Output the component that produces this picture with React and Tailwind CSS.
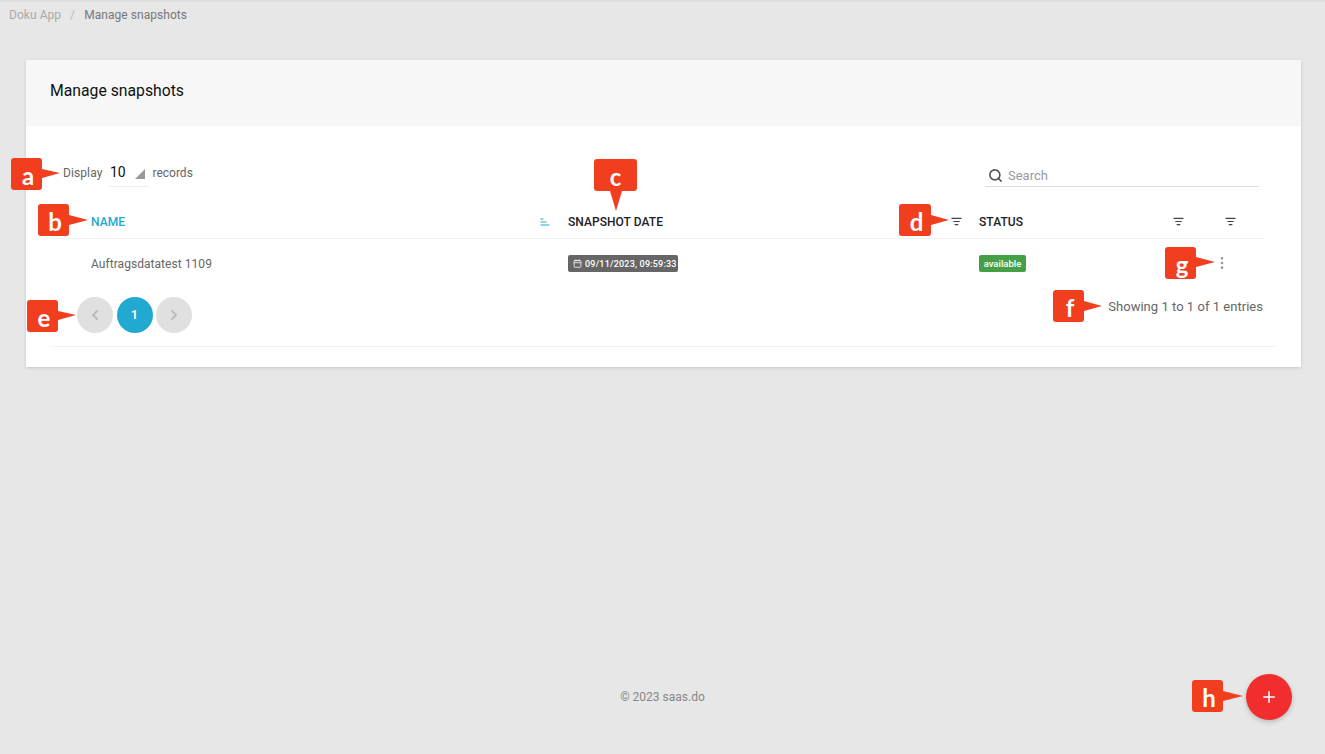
import React from "react";
import { Search, Calendar, ChevronLeft, ChevronRight, EllipsisVertical, Plus, ListFilter } from "lucide-react";

function FilterIcon() {
  return <ListFilter size={11} strokeWidth={2.6} className="text-[#444]" />;
}

function SortIcon() {
  return (
    <svg width="12" height="12" viewBox="0 0 12 12" fill="none" stroke="#22a9d1" strokeWidth="1.1">
      <path d="M1.5 3h3M1.5 6h6M1.5 9h9" />
    </svg>
  );
}

// annotation marker: box + pointer, laid over the page
function Callout({ letter, box, tip, base }) {
  return (
    <>
      <div className={`absolute flex items-center justify-center rounded-[3px] bg-[#f03e1f] pt-[3px] font-['Lato',sans-serif] text-[24px] leading-none font-bold text-white ${box}`}>
        {letter}
      </div>
      <svg className="pointer-events-none absolute top-0 left-0" width="1325" height="754">
        <polygon points={`${base} ${tip}`} fill="#f03e1f" />
      </svg>
    </>
  );
}

export default function App() {
  return (
    <div className="relative flex h-[754px] w-[1325px] flex-col overflow-hidden border-t-2 border-[#dedede] bg-[#e7e7e7] font-['Roboto',sans-serif]">
      <div className="flex h-[58px] shrink-0 items-start gap-[9px] pt-[6px] pl-[9px] text-xs leading-[15px] tracking-[0.05px]">
        <span className="text-[#aaa]">Doku App</span>
        <span className="text-[#bbb]">/</span>
        <span className="text-[#777]">Manage snapshots</span>
      </div>

      <div className="ml-[26px] h-[307px] w-[1275px] bg-white shadow-[0_1px_3px_rgba(0,0,0,0.15)]">
        <div className="flex h-[66px] items-center bg-[#f7f7f7] pb-[5px] pl-[24px] text-[15.75px] font-normal text-[#111]">
          Manage snapshots
        </div>

        <div className="flex h-[79px] items-start justify-between pt-[33px] pr-[42px] pl-[37px]">
          <div className="flex items-center text-xs text-[#666]">
            <span className="tracking-[0.1px]">Display</span>
            <div className="mr-[3px] ml-[7px] flex h-[28px] w-[40px] items-center justify-between border-b border-[#eee] pr-[3px] pb-[1px] text-sm text-[#111]">
              <span className="pl-[0.5px]">10</span>
              <svg width="12" height="12" viewBox="0 0 12 12" className="mt-[3px]">
                <polygon points="11,1 11,11 1,11" fill="#999" />
              </svg>
            </div>
            <span>records</span>
          </div>
          <div className="flex h-[28px] w-[274px] items-center gap-[5px] border-b border-[#ddd] pt-[6px] pl-[3px] text-[13px] text-[#999]">
            <Search size={15} strokeWidth={2.6} className="text-[#555]" />
            <span>Search</span>
          </div>
        </div>

        <div className="ml-[24px] w-[1214px]">
          <div className="grid h-[34px] grid-cols-[518px_411px_222px_63px] items-center border-b border-[#f0f0f0] text-xs font-medium tracking-[0.05px] text-[#222]">
            <div className="flex items-center justify-between pr-[17px] pl-[41px] text-[#22a9d1]">
              <span>NAME</span>
              <SortIcon />
            </div>
            <div className="flex items-center justify-between pr-[17px]">
              <span>SNAPSHOT DATE</span>
              <FilterIcon />
            </div>
            <div className="flex items-center justify-between pr-[17px]">
              <span>STATUS</span>
              <FilterIcon />
            </div>
            <div className="pl-[24px]">
              <FilterIcon />
            </div>
          </div>

          <div className="grid h-[45px] grid-cols-[518px_411px_222px_63px] items-center pt-[4px] text-xs tracking-[0.05px] text-[#666]">
            <div className="pl-[41px]">Auftragsdatatest 1109</div>
            <div>
              <span className="inline-flex h-[17px] w-[110px] items-center gap-[3px] rounded-[2px] bg-[#666] pl-[5px] text-[9px] font-medium tracking-[0.2px] whitespace-nowrap text-white">
                <Calendar size={9} strokeWidth={2} />
                09/11/2023, 09:59:33
              </span>
            </div>
            <div>
              <span className="inline-flex h-[17px] w-[47px] items-center justify-center rounded-[2px] bg-[#43a047] text-[9.5px] font-medium tracking-normal text-white">
                available
              </span>
            </div>
            <div className="mb-[2px] pl-[13px]">
              <EllipsisVertical size={16} strokeWidth={2} className="text-[#999]" />
            </div>
          </div>
        </div>

        <div className="mr-[24px] ml-[24px] flex h-[63px] items-start justify-between border-b border-[#f3f3f3] pr-[14px] pl-[27px]">
          <div className="flex gap-[3.5px] pt-[13px]">
            <div className="flex h-[36px] w-[36px] items-center justify-center rounded-full bg-[#e0e0e0] text-[#bbb]">
              <ChevronLeft size={16} strokeWidth={3} />
            </div>
            <div className="flex h-[36px] w-[36px] items-center justify-center rounded-full bg-[#22a9d1] text-xs font-bold text-white">
              1
            </div>
            <div className="flex h-[36px] w-[36px] items-center justify-center rounded-full bg-[#e0e0e0] text-[#bbb]">
              <ChevronRight size={16} strokeWidth={3} />
            </div>
          </div>
          <div className="pt-[15px] text-[13px] leading-[15px] tracking-[0.03px] text-[#666]">Showing 1 to 1 of 1 entries</div>
        </div>
      </div>

      <div className="mt-auto mb-[49px] text-center text-xs text-[#888]">© 2023 saas.do</div>

      <button className="absolute top-[672px] left-[1246px] flex h-[46px] w-[46px] items-center justify-center rounded-full bg-[#f12d2d] text-white shadow-[0_2px_5px_rgba(0,0,0,0.2)]">
        <Plus size={18} strokeWidth={2} />
      </button>

      <div className="absolute top-[-2px] left-0 h-[754px] w-[1325px]">
        <Callout letter="a" box="left-[11px] top-[158px] h-[32px] w-[31px] pl-[3px]" base="42,169 42,178" tip="60,173" />
        <Callout letter="b" box="left-[38px] top-[204px] h-[32px] w-[31px] pl-[3px]" base="69,215 69,225" tip="88,220" />
        <Callout letter="c" box="left-[594px] top-[159px] h-[32px] w-[43px]" base="610,191 622,191" tip="616,211" />
        <Callout letter="d" box="left-[899px] top-[204px] h-[32px] w-[32px] pl-[3px]" base="931,215 931,225" tip="949,220" />
        <Callout letter="e" box="left-[27px] top-[300px] h-[32px] w-[31px] pl-[3px]" base="58,311 58,320" tip="76,315" />
        <Callout letter="f" box="left-[1053px] top-[290px] h-[32px] w-[31px] pl-[3px]" base="1084,301 1084,311" tip="1102,306" />
        <Callout letter="g" box="left-[1165px] top-[247px] h-[32px] w-[31px] pl-[3px]" base="1196,257 1196,267" tip="1215,262" />
        <Callout letter="h" box="left-[1192px] top-[680px] h-[32px] w-[31px] pl-[3px]" base="1223,691 1223,701" tip="1243,696" />
      </div>
    </div>
  );
}
